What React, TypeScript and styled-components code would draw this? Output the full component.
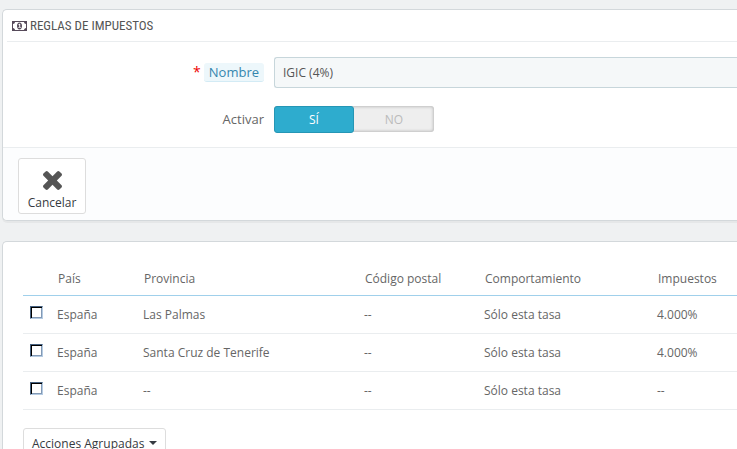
import React from "react";
import styled, { createGlobalStyle, css } from "styled-components";

const GlobalStyle = createGlobalStyle`
  * { box-sizing: border-box; }
  body {
    margin: 0;
    background: #eff1f2;
    color: #666;
    font: 12px/17px "Open Sans", "Noto Sans", sans-serif;
  }
  input, button { font: inherit; }
`;

const Page = styled.main`
  display: flex;
  flex-direction: column;
  gap: 20px;
  height: 100vh;
  padding: 9px 0 0 2px;
  overflow: hidden;
`;

const panel = css`
  flex: none;
  background: #fff;
  border: 1px solid #d3d8db;
  border-right: 0;
  border-radius: 5px 0 0 5px;
  box-shadow: 0 2px 0 rgba(0, 0, 0, 0.04);
`;

const FormPanel = styled.form`
  ${panel}
`;

const ListPanel = styled.section`
  ${panel}
  padding: 20px 0 20px 20px;
`;

const Heading = styled.h3`
  display: flex;
  align-items: center;
  gap: 3px;
  height: 32px;
  margin: 0 0 15px 4px;
  padding-left: 5px;
  border-bottom: 1px solid #eaedef;
  color: #555;
  font: 400 13px/32px "Ubuntu Condensed", "Roboto Condensed", sans-serif;
  text-transform: uppercase;
`;

const Fields = styled.div`
  display: grid;
  row-gap: 18px;
  padding-bottom: 15px;
`;

const Field = styled.div`
  display: grid;
  grid-template-columns: 261px 1fr;
  column-gap: 10px;
  align-items: center;
`;

const Label = styled.label`
  justify-self: end;
  font-size: 13px;
  line-height: 18px;
`;

const Required = styled.span`
  margin-right: 3px;
  color: #e00;
  font-size: 14px;
`;

const Hint = styled.span`
  display: inline-block;
  padding: 0 5px;
  background: #edf7fb;
  border-bottom: 1px solid #d3ebf5;
  border-radius: 3px;
  color: #3586ae;
`;

const TextInput = styled.input`
  width: 100%;
  height: 31px;
  padding: 0 8px;
  background: #f5f8f9;
  border: 1px solid #c7d6db;
  border-right: 0;
  border-radius: 3px 0 0 3px;
  color: #555;
`;

const Switch = styled.div`
  display: grid;
  grid-template-columns: 1fr 1fr;
  width: 160px;
  height: 26px;
  background: #eee;
  border-radius: 3px;
  box-shadow: inset 0 0 3px 1px rgba(0, 0, 0, 0.2);
`;

const SwitchRadio = styled.input`
  appearance: none;
  position: absolute;
  margin: 0;
`;

const SwitchLabel = styled.label`
  border: 1px solid transparent;
  border-radius: 3px;
  color: #bbb;
  line-height: 25px;
  text-align: center;
  &:has(input:checked) {
    background: #2eacce;
    border-color: #2596b5;
    color: #fff;
  }
`;

const Footer = styled.footer`
  padding: 10px 15px 6px;
  background: #fcfdfe;
  border-top: 1px solid #eaedef;
  border-radius: 0 0 0 5px;
`;

const Button = styled.button`
  background: #fff;
  border: 1px solid #ddd;
  border-radius: 3px;
  color: #363a41;
`;

const CancelButton = styled(Button)`
  display: flex;
  flex-direction: column;
  align-items: center;
  gap: 4px;
  min-width: 68px;
  height: 56px;
  padding: 12px 8px 0;
`;

const BulkButton = styled(Button)`
  display: flex;
  align-items: center;
  gap: 5px;
  height: 31px;
  margin-top: 18px;
  padding: 0 8px;
`;

const Table = styled.table`
  width: 100%;
  table-layout: fixed;
  border-collapse: collapse;
  text-align: left;
`;

const Column = styled.col<{ $width?: number }>`
  width: ${(p) => (p.$width ? p.$width + "px" : "auto")};
`;

const HeaderCell = styled.th`
  height: 33px;
  padding: 0 8px;
  border-bottom: 1px solid #a0d0eb;
  font-weight: 400;
`;

const Cell = styled.td`
  height: 38px;
  padding: 0 7px;
  border-bottom: 1px solid #eaedef;
`;

const Checkbox = styled.input`
  appearance: none;
  display: block;
  width: 13px;
  height: 13px;
  margin: 0 0 4px;
  background: #fff;
  border: 1px solid;
  border-color: #45607f #b5cbe2 #b5cbe2 #45607f;
  box-shadow: inset 1px 1px 0 #000, inset -1px -1px 0 #8299b5;
  &:checked { background: #45607f; }
`;

const MoneyIcon = () => (
  <svg width="15" height="10" viewBox="0 0 15 10" aria-hidden="true">
    <path
      fill="#564a5a"
      fillRule="evenodd"
      d="M0 0h15v10H0zM3 1C3 2 2 3 1 3v4c1 0 2 1 2 2h9c0-1 1-2 2-2V3c-1 0-2-1-2-2zM7.5 1.6C9 1.6 10 3 10 5S9 8.400 7.500 8.400 5 7 5 5s1-3.400 2.500-3.400zM6.200 3.800l.6.4.4-.3V6H6.300v.8h2.600V6h-.7V2.800h-.8z"
    />
  </svg>
);

const CrossIcon = () => (
  <svg width="19" height="19" viewBox="302 366 1188 1188" aria-hidden="true">
    <path
      fill="#555"
      d="M1490 1322q0 40-28 68l-136 136q-28 28-68 28t-68-28l-294-294-294 294q-28 28-68 28t-68-28l-136-136q-28-28-28-68t28-68l294-294-294-294q-28-28-28-68t28-68l136-136q28-28 68-28t68 28l294 294 294-294q28-28 68-28t68 28l136 136q28 28 28 68t-28 68l-294 294 294 294q28 28 28 68z"
    />
  </svg>
);

const CaretIcon = () => (
  <svg width="8" height="4" viewBox="0 0 8 4" aria-hidden="true">
    <path fill="#363a41" d="M0 0h8L4 4z" />
  </svg>
);

const columns = ["País", "Provincia", "Código postal", "Comportamiento", "Impuestos"];
const widths = [27, 86, 221, 120, 173, undefined];
const rules = [
  ["España", "Las Palmas", "--", "Sólo esta tasa", "4.000%"],
  ["España", "Santa Cruz de Tenerife", "--", "Sólo esta tasa", "4.000%"],
  ["España", "--", "--", "Sólo esta tasa", "--"],
];

export default function App() {
  return (
    <>
      <GlobalStyle />
      <Page>
        <FormPanel onSubmit={(e) => e.preventDefault()}>
          <Heading>
            <MoneyIcon />
            Reglas de impuestos
          </Heading>
          <Fields>
            <Field>
              <Label htmlFor="name">
                <Required>*</Required>
                <Hint>Nombre</Hint>
              </Label>
              <TextInput id="name" type="text" defaultValue="IGIC (4%)" />
            </Field>
            <Field>
              <Label as="span" id="active-label">Activar</Label>
              <Switch role="radiogroup" aria-labelledby="active-label">
                <SwitchLabel>
                  <SwitchRadio type="radio" name="active" defaultChecked />
                  SÍ
                </SwitchLabel>
                <SwitchLabel>
                  <SwitchRadio type="radio" name="active" />
                  NO
                </SwitchLabel>
              </Switch>
            </Field>
          </Fields>
          <Footer>
            <CancelButton type="button">
              <CrossIcon />
              Cancelar
            </CancelButton>
          </Footer>
        </FormPanel>
        <ListPanel>
          <Table>
            <colgroup>
              {widths.map((w, i) => (
                <Column key={i} $width={w} />
              ))}
            </colgroup>
            <thead>
              <tr>
                <HeaderCell />
                {columns.map((c) => (
                  <HeaderCell key={c} scope="col">{c}</HeaderCell>
                ))}
              </tr>
            </thead>
            <tbody>
              {rules.map((rule, i) => (
                <tr key={i}>
                  <Cell>
                    <Checkbox type="checkbox" aria-label={`${rule[0]} ${rule[1]}`} />
                  </Cell>
                  {rule.map((value, j) => (
                    <Cell key={j}>{value}</Cell>
                  ))}
                </tr>
              ))}
            </tbody>
          </Table>
          <BulkButton type="button">
            Acciones Agrupadas
            <CaretIcon />
          </BulkButton>
        </ListPanel>
      </Page>
    </>
  );
}
